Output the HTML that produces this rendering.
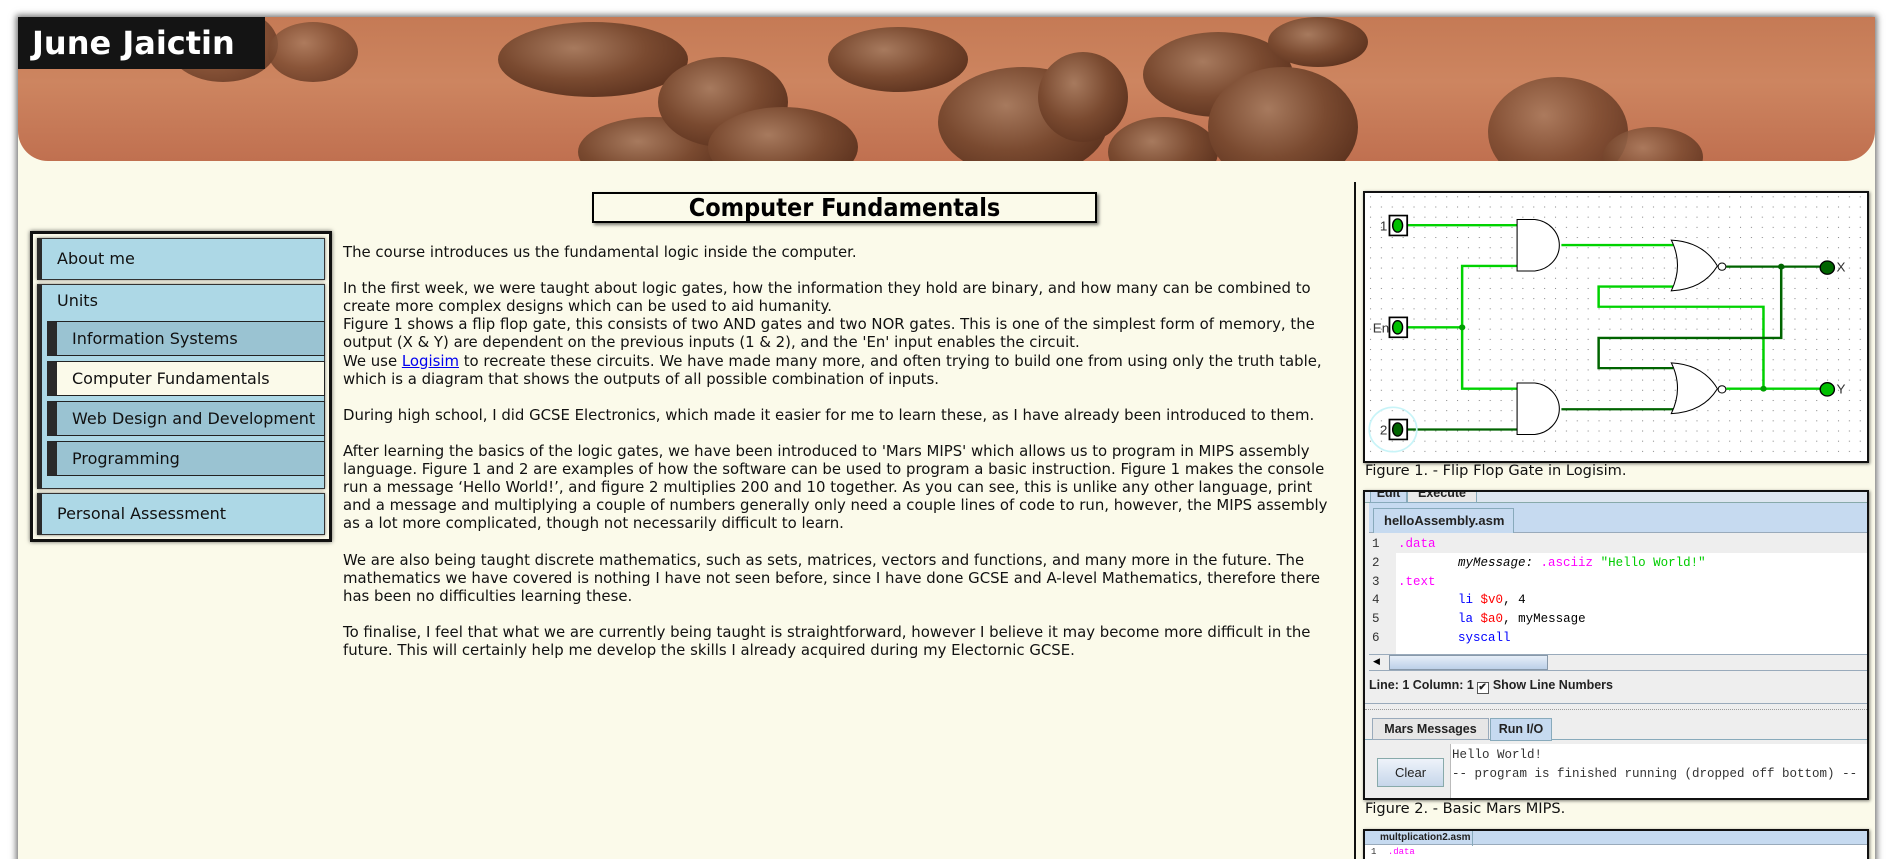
<!DOCTYPE html>
<html><head><meta charset="utf-8">
<style>
*{box-sizing:border-box;margin:0;padding:0}
html,body{width:1895px;height:859px;overflow:hidden}
body{background:#fff;font-family:"DejaVu Sans","Liberation Sans",sans-serif;position:relative}
#wrap{position:absolute;left:18px;top:17px;width:1857px;height:850px;background:#fbfaea;box-shadow:0 0 6px 2px rgba(0,0,0,.55)}
#hdr{position:absolute;left:0;top:0;width:1857px;height:144px;border-radius:0 0 30px 30px;overflow:hidden;background:linear-gradient(180deg,#c57a55 0%,#cd8560 45%,#c07050 100%)}
#hdr .b{position:absolute;border-radius:50%;background:radial-gradient(ellipse at 40% 35%,#a77a5e 0%,#7a4a30 45%,#4a2414 100%)}
#title{position:absolute;left:0;top:0;width:247px;height:52px;background:#141414;color:#fff;font-weight:bold;font-size:32px;line-height:52px;padding-left:14px}
#h1{position:absolute;left:574px;top:175px;width:505px;height:31px;border:2px solid #000;box-shadow:2px 2px 3px rgba(0,0,0,.5);text-align:center;font-size:25px;font-weight:bold;line-height:27px;font-family:"DejaVu Sans Condensed","DejaVu Sans",sans-serif}
#nav{position:absolute;left:12px;top:214px;width:302px;height:311px;border:3px solid #111;box-shadow:0 0 4px rgba(0,0,0,.6)}
.it{position:absolute;left:4px;width:288px;background:#add8e6;border:1px solid #333;border-left:5px solid #2a2a2a;font-size:16px;color:#111;padding-left:15px;box-shadow:0 0 3px rgba(0,0,0,.5)}
.sub{position:absolute;left:10px;width:278px;height:35px;background:#9ac3d2;border:1px solid #222;border-left:10px solid #2a2a2a;font-size:16px;line-height:33px;padding-left:15px;color:#111}
#txt{position:absolute;left:325px;top:226px;width:996px;font-size:14.9px;line-height:18.1px;color:#111}
#txt p{margin-bottom:18.1px}
#txt a{color:#00e;text-decoration:underline}
#div{position:absolute;left:1336px;top:165px;width:2px;height:700px;background:#111}
.fig{position:absolute;left:1345px;width:506px;border:2px solid #111;box-shadow:1px 1px 3px rgba(0,0,0,.5);background:#fff;overflow:hidden}
.cap{position:absolute;left:1365px;font-size:14.6px;color:#111}
.mono{font-family:"Liberation Mono","DejaVu Sans Mono",monospace}
.ui{font-family:"Liberation Sans",sans-serif;font-weight:bold;font-size:12.5px;color:#222}
</style></head><body>
<div id="wrap">
 <div id="hdr">
  <div class="b" style="left:150px;top:-10px;width:110px;height:75px;opacity:.8"></div>
  <div class="b" style="left:250px;top:5px;width:90px;height:60px;opacity:.8"></div>
  <div class="b" style="left:480px;top:5px;width:190px;height:75px"></div>
  <div class="b" style="left:560px;top:100px;width:150px;height:70px"></div>
  <div class="b" style="left:640px;top:40px;width:130px;height:90px"></div>
  <div class="b" style="left:690px;top:90px;width:150px;height:80px"></div>
  <div class="b" style="left:810px;top:10px;width:140px;height:65px"></div>
  <div class="b" style="left:920px;top:50px;width:170px;height:110px"></div>
  <div class="b" style="left:1020px;top:35px;width:90px;height:90px"></div>
  <div class="b" style="left:1090px;top:100px;width:110px;height:70px"></div>
  <div class="b" style="left:1125px;top:15px;width:150px;height:85px"></div>
  <div class="b" style="left:1190px;top:50px;width:150px;height:120px"></div>
  <div class="b" style="left:1250px;top:0px;width:100px;height:50px"></div>
  <div class="b" style="left:1470px;top:60px;width:140px;height:110px;opacity:.85"></div>
  <div class="b" style="left:1585px;top:110px;width:100px;height:60px;opacity:.85"></div>
  <div id="title">June Jaictin</div>
 </div>
 <div id="h1">Computer Fundamentals</div>
 <div id="nav">
  <div class="it" style="top:4px;height:42px;line-height:40px">About me</div>
  <div class="it" style="top:50px;height:205px;padding-top:6px;line-height:20px">Units
   <div class="sub" style="left:5px;top:36px">Information Systems</div>
   <div class="sub" style="left:5px;top:76px;background:#fbfaea">Computer Fundamentals</div>
   <div class="sub" style="left:5px;top:116px">Web Design and Development</div>
   <div class="sub" style="left:5px;top:156px">Programming</div>
  </div>
  <div class="it" style="top:259px;height:42px;line-height:40px">Personal Assessment</div>
 </div>
 <div id="txt">
  <p>The course introduces us the fundamental logic inside the computer.</p>
  <p>In the first week, we were taught about logic gates, how the information they hold are binary, and how many can be combined to create more complex designs which can be used to aid humanity.<br>Figure 1 shows a flip flop gate, this consists of two AND gates and two NOR gates. This is one of the simplest form of memory, the output (X &amp; Y) are dependent on the previous inputs (1 &amp; 2), and the 'En' input enables the circuit.<br>We use <a>Logisim</a> to recreate these circuits. We have made many more, and often trying to build one from using only the truth table, which is a diagram that shows the outputs of all possible combination of inputs.</p>
  <p>During high school, I did GCSE Electronics, which made it easier for me to learn these, as I have already been introduced to them.</p>
  <p>After learning the basics of the logic gates, we have been introduced to 'Mars MIPS' which allows us to program in MIPS assembly language. Figure 1 and 2 are examples of how the software can be used to program a basic instruction. Figure 1 makes the console run a message ‘Hello World!’, and figure 2 multiplies 200 and 10 together. As you can see, this is unlike any other language, print and a message and multiplying a couple of numbers generally only need a couple lines of code to run, however, the MIPS assembly as a lot more complicated, though not necessarily difficult to learn.</p>
  <p>We are also being taught discrete mathematics, such as sets, matrices, vectors and functions, and many more in the future. The mathematics we have covered is nothing I have not seen before, since I have done GCSE and A-level Mathematics, therefore there has been no difficulties learning these.</p>
  <p>To finalise, I feel that what we are currently being taught is straightforward, however I believe it may become more difficult in the future. This will certainly help me develop the skills I already acquired during my Electornic GCSE.</p>
 </div>
 <div id="div"></div>
</div>

<div class="fig" style="top:191px;height:272px;left:1363px">
<svg width="502" height="268" viewBox="66 65 1416 808" preserveAspectRatio="none">
 <defs><pattern id="g" x="80" y="75" width="30.7" height="30.7" patternUnits="userSpaceOnUse"><rect width="3" height="3" fill="#888"/></pattern></defs>
 <rect x="66" y="65" width="1416" height="808" fill="#fff"/>
 <rect x="66" y="65" width="1416" height="808" fill="url(#g)"/>
 <g fill="none" stroke-width="7" stroke-linejoin="miter">
  <path d="M185 162H495" stroke="#00d200"/>
  <path d="M620 222H935" stroke="#00d200"/>
  <path d="M495 285H340V655H495M185 470H340" stroke="#00d200"/>
  <path d="M935 347H725V408H1190V655M1085 655H1350" stroke="#00d200"/>
  <path d="M1085 287H1350M1240 287V502H725V593H935M620 717H935M185 778H495" stroke="#006400"/>
 </g>
 <g fill="#fff" stroke="#000" stroke-width="3">
  <path d="M495 145H545A78 78 0 0 1 545 300H495Z"/>
  <path d="M495 638H545A78 78 0 0 1 545 793H495Z"/>
  <path d="M930 207Q965 283 930 360Q1020 355 1060 285Q1020 212 930 207Z"/>
  <path d="M930 577Q965 653 930 730Q1020 725 1060 655Q1020 582 930 577Z"/>
  <circle cx="1073" cy="287" r="11"/><circle cx="1073" cy="657" r="11"/>
 </g>
 <g fill="#00a000"><circle cx="340" cy="470" r="9"/><circle cx="1190" cy="655" r="9"/></g>
 <circle cx="1240" cy="287" r="9" fill="#006400"/>
 <circle cx="145" cy="778" r="67" fill="none" stroke="#c8f4f8" stroke-width="5"/>
 <g fill="#fff" stroke="#000" stroke-width="5">
  <rect x="135" y="133" width="50" height="60"/><rect x="135" y="440" width="50" height="60"/><rect x="135" y="748" width="50" height="60"/>
 </g>
 <g stroke="#000" stroke-width="4"><ellipse cx="158" cy="163" rx="14" ry="20" fill="#00c000"/><ellipse cx="158" cy="470" rx="14" ry="20" fill="#00c000"/><ellipse cx="158" cy="778" rx="14" ry="20" fill="#006400"/>
 <circle cx="1370" cy="290" r="20" fill="#006400"/><circle cx="1370" cy="657" r="20" fill="#00c000"/></g>
 <g font-family="Liberation Sans" font-size="38" fill="#333">
  <text x="108" y="178">1</text><text x="88" y="485">En</text><text x="108" y="793">2</text>
  <text x="1396" y="302">X</text><text x="1396" y="670">Y</text>
 </g>
</svg>
</div>
<div class="cap" style="top:462px">Figure 1. - Flip Flop Gate in Logisim.</div>

<div class="fig" style="top:490px;height:310px;left:1363px;background:#eee">
 <div style="position:absolute;left:0;top:0;width:100%;height:11px;background:#dde6f0;border-bottom:1px solid #8aa"></div>
 <div class="ui" style="position:absolute;left:5px;top:-7px;width:37px;height:18px;background:#c8daf0;border:1px solid #8ab;text-align:center">Edit</div>
 <div class="ui" style="position:absolute;left:42px;top:-7px;width:70px;height:18px;background:#e8e8e8;border:1px solid #8ab;text-align:center">Execute</div>
 <div style="position:absolute;left:4px;top:11px;right:0;height:30px;background:#c6daf0;border-bottom:1px solid #9ab"></div>
 <div class="ui" style="position:absolute;left:8px;top:16px;width:141px;height:25px;background:#c6daf0;border:1px solid #8ab;border-bottom:none;line-height:24px;padding-left:10px;font-size:13px">helloAssembly.asm</div>
 <div style="position:absolute;left:4px;top:42px;right:0;height:120px;background:#fff"></div>
 <div style="position:absolute;left:4px;top:42px;width:27px;height:120px;background:#eee"></div>
 <div style="position:absolute;left:31px;top:42px;right:0;height:19px;background:#eee"></div>
 <div class="mono" style="position:absolute;left:7px;top:43px;font-size:12.5px;line-height:18.8px;color:#333">1<br>2<br>3<br>4<br>5<br>6</div>
 <div class="mono" style="position:absolute;left:33px;top:43px;font-size:12.5px;line-height:18.8px;color:#000;white-space:pre"><span style="color:#f0f">.data</span>
        <i>myMessage:</i> <span style="color:#f0f">.asciiz</span> <span style="color:#0c0">"Hello World!"</span>
<span style="color:#f0f">.text</span>
        <span style="color:#00f">li</span> <span style="color:#f00">$v0</span>, 4
        <span style="color:#00f">la</span> <span style="color:#f00">$a0</span>, myMessage
        <span style="color:#00f">syscall</span></div>
 <div style="position:absolute;left:4px;top:162px;right:0;height:17px;background:#eee;border-top:1px solid #9ab;border-bottom:1px solid #9ab"></div>
 <div style="position:absolute;left:24px;top:163px;width:159px;height:15px;background:linear-gradient(#e6eef8,#bcd0e8);border:1px solid #89a"></div>
 <div style="position:absolute;left:8px;top:165px;font-size:9px">◀</div>
 <div class="ui" style="position:absolute;left:4px;top:186px;font-size:12.5px">Line: 1 Column: 1 <span style="display:inline-block;width:12px;height:12px;border:1px solid #555;background:#fff;font-size:10px;line-height:10px;vertical-align:-1px">✔</span> Show Line Numbers</div>
 <div style="position:absolute;left:0;top:208px;right:0;height:4px;border-bottom:1px solid #9ab"></div>
 <div style="position:absolute;left:0;top:217px;right:0;border-top:1px dotted #999"></div>
 <div style="position:absolute;left:0;top:233px;right:0;height:15px;border-bottom:1px solid #8ab"></div>
 <div class="ui" style="position:absolute;left:7px;top:226px;width:117px;height:22px;background:#e6e6e6;border:1px solid #9ab;line-height:21px;text-align:center;font-size:12.5px">Mars Messages</div>
 <div class="ui" style="position:absolute;left:125px;top:226px;width:62px;height:23px;background:#c6daf0;border:1px solid #8ab;line-height:21px;text-align:center;font-size:12.5px">Run I/O</div>
 <div style="position:absolute;left:85px;top:252px;right:0;height:56px;background:#fff;border-left:1px solid #bbb"></div>
 <div class="ui" style="position:absolute;left:12px;top:266px;width:67px;height:29px;background:linear-gradient(#eef3fa,#c6d6ea);border:1px solid #8aa;text-align:center;line-height:27px;font-weight:normal;font-size:13px">Clear</div>
 <div class="mono" style="position:absolute;left:87px;top:254px;font-size:12.5px;line-height:19px;color:#333;white-space:pre">Hello World!
-- program is finished running (dropped off bottom) --</div>
</div>
<div class="cap" style="top:800px">Figure 2. - Basic Mars MIPS.</div>

<div class="fig" style="top:829px;height:40px;left:1363px;background:#fff">
 <div style="position:absolute;left:0;top:0;right:0;height:14px;background:#c6daf0;border-bottom:1px solid #9ab"></div>
 <div class="ui" style="position:absolute;left:8px;top:0;width:100px;height:15px;font-size:10px;line-height:13px;padding-left:7px;border-right:1px solid #8ab">multplication2.asm</div>
 <div class="mono" style="position:absolute;left:6px;top:16px;font-size:9px;color:#333">1 <span style="color:#f0f;margin-left:6px">.data</span></div>
</div>
</body></html>
